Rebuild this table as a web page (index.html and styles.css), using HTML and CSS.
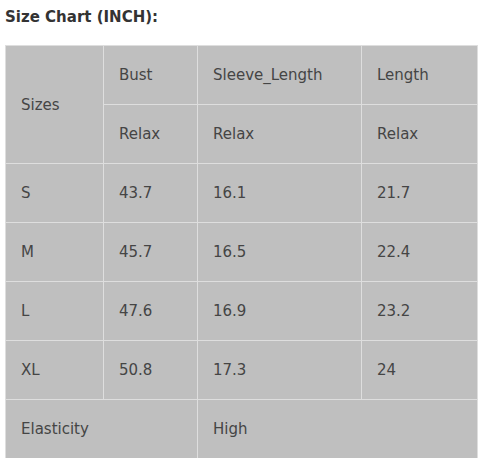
FILE: index.html
```html
<!DOCTYPE html>
<html>
<head>
<meta charset="utf-8">
<link rel="stylesheet" href="styles.css">
</head>
<body>
<div class="page">
  <h3 class="title">Size Chart (INCH):</h3>
  <table class="chart">
    <colgroup>
      <col class="c1"><col class="c2"><col class="c3"><col class="c4">
    </colgroup>
    <tr><td rowspan="2">Sizes</td><td>Bust</td><td>Sleeve_Length</td><td>Length</td></tr>
    <tr><td>Relax</td><td>Relax</td><td>Relax</td></tr>
    <tr><td>S</td><td>43.7</td><td>16.1</td><td>21.7</td></tr>
    <tr><td>M</td><td>45.7</td><td>16.5</td><td>22.4</td></tr>
    <tr><td>L</td><td>47.6</td><td>16.9</td><td>23.2</td></tr>
    <tr><td>XL</td><td>50.8</td><td>17.3</td><td>24</td></tr>
    <tr><td colspan="2">Elasticity</td><td colspan="2">High</td></tr>
  </table>
</div>
</body>
</html>
```
FILE: styles.css
```css
html, body {
  margin: 0;
  padding: 0;
  background: #ffffff;
}
.page {
  padding: 0 3px 0 5px;
  font-family: "DejaVu Sans", sans-serif;
}
.title {
  margin: 0;
  padding-top: 8px;
  height: 45px;
  box-sizing: border-box;
  font-size: 15px;
  font-weight: bold;
  color: #333333;
  line-height: 18px;
}
.chart {
  width: 472px;
  border-collapse: collapse;
  table-layout: fixed;
  background: #bfbfbf;
  font-size: 15px;
  color: #454545;
}
.c1 { width: 98px; }
.c2 { width: 94px; }
.c3 { width: 164px; }
.c4 { width: 116px; }
.chart tr {
  height: 59px;
}
.chart td {
  border: 1px solid #dedede;
  padding: 0 0 0 15px;
  vertical-align: middle;
  white-space: nowrap;
}
```
